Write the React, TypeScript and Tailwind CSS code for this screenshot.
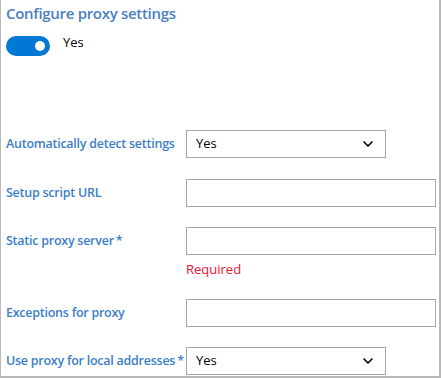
import { ChevronDown } from "lucide-react"

function Toggle() {
  return (
    <div className="relative h-[20px] w-[44px] rounded-full bg-[#0078d4]">
      <div className="absolute right-[5px] top-[5px] h-[10px] w-[10px] rounded-full bg-white" />
    </div>
  )
}

function Label({ text, required }: { text: string; required?: boolean }) {
  return (
    <div className="w-[180px] shrink-0 whitespace-nowrap text-[12.5px] font-semibold tracking-[-0.25px] text-[#3c7fc6]">
      {text}
      {required && <span className="ml-[2px]">*</span>}
    </div>
  )
}

function Select({ value }: { value: string }) {
  return (
    <div className="flex h-[28px] w-[200px] items-center justify-between border border-[#a6a6a6] bg-white pl-[9px] pr-[9px] text-[13px] text-black">
      <span>{value}</span>
      <ChevronDown size={16} strokeWidth={2.5} className="text-black" />
    </div>
  )
}

function TextInput() {
  return <div className="h-[28px] w-[250px] border border-[#a6a6a6] bg-white" />
}

export default function App() {
  return (
    <div
      className="h-[378px] w-[441px] border-b-2 border-l border-r-2 border-[#b9b9b9] bg-white pl-[5px] pt-[2px]"
      style={{ fontFamily: '"Open Sans", "Noto Sans", sans-serif' }}
    >
      <h1 className="text-[15px] font-semibold leading-[22px] tracking-[-0.3px] text-[#4a7fc0]">
        Configure proxy settings
      </h1>
      <div className="mt-[12px] flex items-start gap-[13px]">
        <Toggle />
        <span className="-mt-[3px] text-[13px] text-black">Yes</span>
      </div>

      <div className="mt-[74px] flex items-center">
        <Label text="Automatically detect settings" />
        <Select value="Yes" />
      </div>

      <div className="mt-[21px] flex items-center">
        <Label text="Setup script URL" />
        <TextInput />
      </div>

      <div className="mt-[20px] flex items-center">
        <Label text="Static proxy server" required />
        <TextInput />
      </div>
      <div className="ml-[180px] mt-[5px] text-[13px] leading-[18px] text-[#ee1133]">Required</div>

      <div className="mt-[21px] flex items-center">
        <Label text="Exceptions for proxy" />
        <TextInput />
      </div>

      <div className="mt-[20px] flex items-center">
        <Label text="Use proxy for local addresses" required />
        <Select value="Yes" />
      </div>
    </div>
  )
}
